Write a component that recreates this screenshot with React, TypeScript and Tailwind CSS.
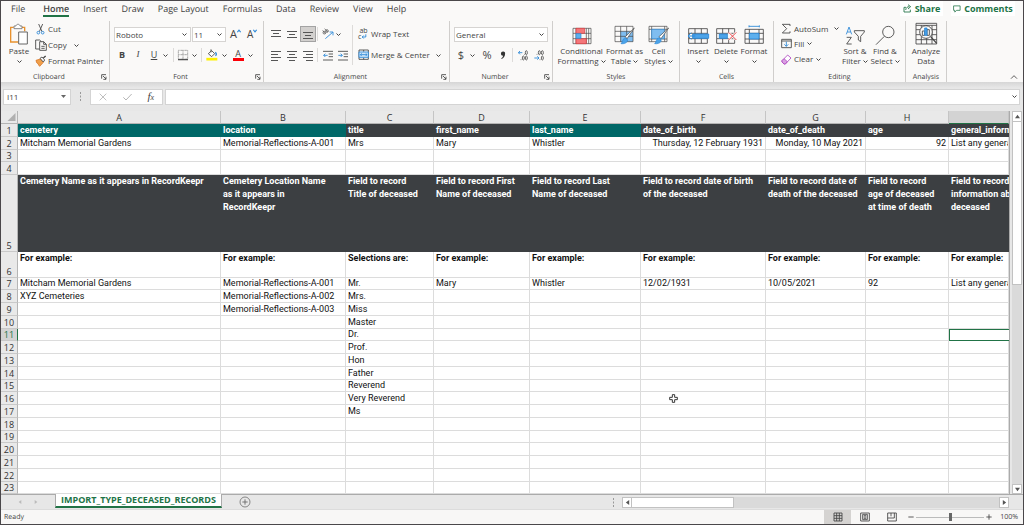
import { type ReactNode } from "react";

const INK = "#444444";
const BLUE = "#2b88d8";

function Chevron({ className = "" }: { className?: string }) {
  return (
    <svg viewBox="0 0 10 10" className={`h-[5px] w-[5px] shrink-0 ${className}`} fill="none" stroke={INK} strokeWidth="2">
      <path d="M1 3l4 4 4-4" />
    </svg>
  );
}

function Icon({ box, className, children }: { box: string; className: string; children: ReactNode }) {
  return (
    <svg viewBox={box} className={`shrink-0 ${className}`} fill="none" stroke={INK} strokeWidth="2.6">
      {children}
    </svg>
  );
}

function Group({ label, width, launcher = false, children }: { label: string; width: string; launcher?: boolean; children: ReactNode }) {
  return (
    <section aria-label={label} className={`flex shrink-0 flex-col ${width}`}>
      <div className="flex h-[50px] w-full border-r border-[#d0cecc]">{children}</div>
      <div className="flex h-[11px] items-center border-r border-[#d0cecc] pt-px text-[7px] leading-[11px]">
        <span className="flex-1 text-center">{label}</span>
        {launcher && (
          <button aria-label={`${label} settings`} className="ml-1 mr-[2px]">
            <Icon box="0 0 18 18" className="h-[6px] w-[6px]">
              <path d="M2 14V2h13M6 6l9 9M15 8v8H7" />
            </Icon>
          </button>
        )}
      </div>
    </section>
  );
}

function Sep({ className = "h-[14px]" }: { className?: string }) {
  return <span className={`w-px shrink-0 bg-[#dddbd9] ${className}`} />;
}

function Picker({ label, value, width }: { label: string; value: string; width: string }) {
  return (
    <div className={`flex h-[15px] items-center border border-[#d6d4d2] bg-white pr-[3px] ${width}`}>
      <select aria-label={label} defaultValue={value} className="h-[13px] min-w-0 flex-1 appearance-none bg-transparent pl-[1px] text-[8px] leading-[13px] outline-none">
        <option>{value}</option>
      </select>
      <Chevron />
    </div>
  );
}

function BigButton({ lines, width, icon, chevron = "none" }: { lines: string[]; width: string; icon: ReactNode; chevron?: "none" | "inline" | "below" }) {
  return (
    <button className={`flex shrink-0 flex-col items-center text-[8px] leading-[10px] ${width}`}>
      <span className="flex h-[25px] items-end justify-center pb-[1px]">{icon}</span>
      <span className="whitespace-nowrap">{lines[0]}</span>
      {lines[1] && (
        <span className="flex items-center gap-[2px] whitespace-nowrap">
          {lines[1]}
          {chevron === "inline" && <Chevron />}
        </span>
      )}
      {chevron === "below" && (
        <span className="flex h-[10px] items-center">
          <Chevron />
        </span>
      )}
    </button>
  );
}

function RowButton({ icon, text, chevron, height = "h-[16px]" }: { icon: ReactNode; text: string; chevron?: string; height?: string }) {
  return (
    <button className={`flex items-center text-[8px] ${height}`}>
      <span className="flex w-[13px] items-center">{icon}</span>
      <span className="whitespace-nowrap">{text}</span>
      {chevron && <Chevron className={chevron} />}
    </button>
  );
}

function Tool({ label, width = "w-[16px]", active = false, children }: { label: string; width?: string; active?: boolean; children: ReactNode }) {
  return (
    <button
      aria-label={label}
      className={`flex h-[16px] shrink-0 items-center justify-center ${width} ${active ? "border border-[#a3a3a3] bg-[#d2d0ce]" : ""}`}
    >
      {children}
    </button>
  );
}

function Lines({ d }: { d: string }) {
  return (
    <svg viewBox="0 0 10 11" className="h-[11px] w-[10px]" stroke="#555555" strokeWidth="1" fill="none">
      <path d={d} />
    </svg>
  );
}

function ClipboardGroup() {
  return (
    <Group label="Clipboard" width="w-[109px]" launcher>
      <div className="ml-[3px]">
        <BigButton
          lines={["Paste"]}
          width="w-[30px]"
          chevron="below"
          icon={
            <Icon box="33 67 60 66" className="h-[22px] w-[20px]">
              <path d="M47 80H38v44h24M72 80h8v12" stroke="#e8912d" strokeWidth="4" />
              <path d="M48 84v-8h6c1-7 11-7 12 0h6v8z" fill="#fff" stroke="#777" />
              <path d="M62 94h26v36H62z" fill="#fff" stroke="#666" strokeWidth="3" />
            </Icon>
          }
        />
      </div>
      <div className="ml-[1px] flex flex-col">
        <RowButton
          text="Cut"
          icon={
            <Icon box="105 69 36 36" className="h-[12px] w-[12px]">
              <path d="M116 72l10 23M128 72l-10 23" />
              <circle cx="115" cy="98" r="4" stroke={BLUE} />
              <circle cx="128" cy="98" r="4" stroke={BLUE} />
            </Icon>
          }
        />
        <RowButton
          text="Copy"
          chevron="ml-[7px]"
          icon={
            <Icon box="104 116 36 36" className="h-[12px] w-[12px]">
              <path d="M117 146h-11v-27h12l5 5" />
              <path d="M118 124h12l8 8v18h-20zM130 124v8h8M123 138h10M123 144h10" />
            </Icon>
          }
        />
        <RowButton
          text="Format Painter"
          icon={
            <Icon box="105 164 36 36" className="h-[12px] w-[12px]">
              <path d="M108 180l14-4 8 10-11 12-3-4-2-4-4-3z" fill="#f0a04b" stroke="#d9782a" />
              <path d="M120 174l6-4 8 9-4 6z" fill="#fff" />
              <path d="M130 173l7-6" strokeWidth="4" />
            </Icon>
          }
        />
      </div>
    </Group>
  );
}

function FontGroup() {
  return (
    <Group label="Font" width="w-[154px]" launcher>
      <div className="flex flex-col pl-1 pt-[6px]">
        <div className="flex h-[15px] items-center">
          <Picker label="Font" value="Roboto" width="w-[77px]" />
          <Picker label="Font size" value="11" width="ml-[1px] w-[34px]" />
          <button aria-label="Increase font size" className="ml-[4px] flex h-[15px] items-start text-[11px] leading-[14px]">
            A
            <Icon box="0 0 10 10" className="mt-[2px] h-[4px] w-[4px]">
              <path d="M1 8l4-5 4 5" stroke={BLUE} />
            </Icon>
          </button>
          <button aria-label="Decrease font size" className="ml-[6px] flex h-[15px] items-start text-[10px] leading-[15px]">
            A
            <Icon box="0 0 10 10" className="mt-[2px] h-[4px] w-[4px]">
              <path d="M1 2l4 5 4-5" stroke={BLUE} />
            </Icon>
          </button>
        </div>
        <div className="mt-[5px] flex h-[16px] items-center text-[9px]">
          <Tool label="Bold"><b>B</b></Tool>
          <Tool label="Italic"><i className="font-['Liberation_Serif',serif]">I</i></Tool>
          <Tool label="Underline"><u>U</u></Tool>
          <Chevron className="ml-[1px]" />
          <Sep className="ml-[5px] h-[14px]" />
          <Tool label="Borders" width="w-[18px]">
            <Icon box="0 0 36 36" className="h-[12px] w-[12px]">
              <path d="M4 4h28v26H4zM18 4v26M4 17h28" stroke="#888" strokeDasharray="2.5 1.5" />
              <path d="M3 32h30" strokeWidth="3.5" />
            </Icon>
          </Tool>
          <Chevron />
          <Sep className="ml-[4px] h-[14px]" />
          <Tool label="Fill color" width="w-[20px]">
            <Icon box="624 148 36 36" className="h-[12px] w-[12px]">
              <path d="M631 162l10-9 9 9-9 9z" fill="#fff" />
              <path d="M639 149v9" />
              <path d="M652 158c4 4 4 8 0 10" stroke={BLUE} strokeWidth="4" />
              <path d="M625 178.500h33" stroke="#fff100" strokeWidth="8" />
            </Icon>
          </Tool>
          <Chevron />
          <Tool label="Font color" width="ml-[2px] w-[18px]">
            <span className="flex flex-col items-center">
              <span className="leading-[9px]">A</span>
              <span className="h-[3px] w-[11px] bg-[#fb0007]" />
            </span>
          </Tool>
          <Chevron className="ml-[1px]" />
        </div>
      </div>
    </Group>
  );
}

function AlignmentGroup() {
  return (
    <Group label="Alignment" width="w-[186px]" launcher>
      <div className="flex flex-col gap-[5px] pl-[4px] pt-[5px]">
        <div className="flex h-[16px] items-center">
          <Tool label="Top align"><Lines d="M0 1.500h10M2 4.500h6M0 7.500h10" /></Tool>
          <Tool label="Middle align"><Lines d="M0 2.500h10M2 5.500h6M0 8.500h10" /></Tool>
          <Tool label="Bottom align" active><Lines d="M0 3.500h10M2 6.500h6M0 9.500h10" /></Tool>
          <Sep className="ml-[1px] h-[14px]" />
          <Tool label="Orientation" width="ml-[3px] w-[14px]">
            <Icon box="200 84 36 34" className="h-[12px] w-[12px]">
              <circle cx="207" cy="97" r="4" strokeWidth="2" />
              <circle cx="215" cy="92" r="4" strokeWidth="2" />
              <path d="M202 90l8 10M208 85l9 10" strokeWidth="2" />
              <path d="M210 115l22-19M223 95h10v10" stroke={BLUE} />
            </Icon>
          </Tool>
          <Chevron className="ml-[1px]" />
        </div>
        <div className="flex h-[16px] items-center">
          <Tool label="Align left"><Lines d="M0 1.500h10M0 4.500h7M0 7.500h10M0 10.500h7" /></Tool>
          <Tool label="Center"><Lines d="M0 1.500h10M2 4.500h6M0 7.500h10M2 10.500h6" /></Tool>
          <Tool label="Align right"><Lines d="M0 1.500h10M3 4.500h7M0 7.500h10M3 10.500h7" /></Tool>
          <Sep className="ml-[1px] h-[14px]" />
          <Tool label="Decrease indent" width="ml-[3px] w-[14px]">
            <Icon box="0 0 30 33" className="h-[11px] w-[10px]">
              <path d="M0 4h30M17 12h13M17 20h13M0 30h30" />
              <path d="M14 16H2M7 11l-5 5 5 5" stroke={BLUE} />
            </Icon>
          </Tool>
          <Tool label="Increase indent">
            <Icon box="0 0 30 33" className="h-[11px] w-[10px]">
              <path d="M0 4h30M17 12h13M17 20h13M0 30h30" />
              <path d="M1 16h12M8 11l5 5-5 5" stroke={BLUE} />
            </Icon>
          </Tool>
        </div>
      </div>
      <Sep className="ml-[1px] mt-[4px] h-[40px]" />
      <div className="ml-[5px] flex flex-col gap-[5px] pt-[5px]">
        <RowButton
          text="Wrap Text"
          icon={
            <span className="flex w-[11px] flex-col text-[7px] leading-[6px]">
              <span>ab</span>
              <span className="flex items-center">
                c
                <Icon box="0 0 20 18" className="h-[6px] w-[6px]">
                  <path d="M16 0v9H4M9 4L4 9l5 5" stroke={BLUE} strokeWidth="3" />
                </Icon>
              </span>
            </span>
          }
        />
        <RowButton
          text="Merge & Center"
          chevron="ml-[6px]"
          icon={
            <Icon box="309 149 36 36" className="h-[12px] w-[12px]">
              <path d="M312 152h28v28h-28zM326 152v5M326 175v5" />
              <path d="M312 158h28v16h-28z" fill="#cfe6f8" stroke={BLUE} />
              <path d="M316 166h20M320 162l-4 4 4 4M332 162l4 4-4 4" stroke={BLUE} />
            </Icon>
          }
        />
      </div>
    </Group>
  );
}

function Decimals({ arrow, topX, bottomX, dots }: { arrow: string; topX: number[]; bottomX: number[]; dots: string }) {
  return (
    <Icon box="0 0 30 33" className="h-[11px] w-[10px]">
      <path d={arrow} stroke={BLUE} />
      {topX.map((x) => (
        <ellipse key={x} cx={x} cy="8" rx="3" ry="6" strokeWidth="2.4" />
      ))}
      {bottomX.map((x) => (
        <ellipse key={x} cx={x} cy="24" rx="3" ry="6" strokeWidth="2.4" />
      ))}
      <path d={dots} />
    </Icon>
  );
}

function NumberGroup() {
  return (
    <Group label="Number" width="w-[103px]" launcher>
      <div className="flex flex-col pl-[4px] pt-[6px]">
        <Picker label="Number format" value="General" width="w-[94px]" />
        <div className="mt-[5px] flex h-[16px] items-center text-[11px]">
          <Tool label="Accounting format" width="w-[14px]">$</Tool>
          <Chevron className="ml-[2px]" />
          <Tool label="Percent style" width="ml-[4px] w-[16px]">%</Tool>
          <Tool label="Comma style">
            <svg viewBox="0 0 18 30" className="h-[9px] w-[6px]" fill="#333">
              <path d="M9 2a6 6 0 0 1 7 7c0 9-5 15-12 18l-1-2c4-3 6-5 6-9a7 7 0 0 1 0-14z" />
            </svg>
          </Tool>
          <Sep className="ml-[1px] h-[14px]" />
          <Tool label="Increase decimal" width="ml-[2px] w-[16px]">
            <Decimals arrow="M13 8H1M6 3L1 8l5 5" topX={[25]} bottomX={[16, 25]} dots="M18 13h2M8 29h2" />
          </Tool>
          <Tool label="Decrease decimal">
            <Decimals arrow="M1 24h14M10 19l5 5-5 5" topX={[16, 25]} bottomX={[25]} dots="M8 13h2M17 29h2" />
          </Tool>
        </div>
      </div>
    </Group>
  );
}

function StylesGroup() {
  return (
    <Group label="Styles" width="w-[127px]">
      <div className="flex pl-[4px]">
        <BigButton
          lines={["Conditional", "Formatting"]}
          width="w-[49px]"
          chevron="inline"
          icon={
            <Icon box="381 73 60 54" className="h-[18px] w-[20px]">
              <path d="M384 77h54v46h-54zM384 92h54M384 108h54M393 77v46M424 77v46M431 77v46" strokeWidth="2" />
              <path d="M393 77h26v15h-26zM393 108h31v15h-31z" fill="#f4777a" stroke="#d9353a" strokeWidth="2" />
              <path d="M393 93h15v14h-15z" fill="#5eb0ee" stroke={BLUE} strokeWidth="2" />
            </Icon>
          }
        />
        <BigButton
          lines={["Format as", "Table"]}
          width="w-[37px]"
          chevron="inline"
          icon={
            <Icon box="511 73 66 60" className="h-[20px] w-[22px]">
              <path d="M530 92h38v31h-38z" fill="#7fbdf0" stroke="none" />
              <path d="M514 77h54v46h-54zM514 92h54M514 107h54M531 77v46M549 77v46" strokeWidth="2" />
              <path d="M572 82l-22 32-5-6z" fill="#fff" strokeWidth="2" />
              <path d="M543 112c5 0 10 4 8 10-3 6-11 8-19 7 5-4 4-14 11-17z" fill="#4ca3e8" stroke={BLUE} strokeWidth="2" />
            </Icon>
          }
        />
        <BigButton
          lines={["Cell", "Styles"]}
          width="w-[31px]"
          chevron="inline"
          icon={
            <Icon box="611 73 66 60" className="h-[20px] w-[22px]">
              <path d="M614 77h54v46h-54zM614 86h54M614 115h54M622 77v46M661 77v46" strokeWidth="2" />
              <path d="M622 86h38v28h-38z" fill="#7fbdf0" stroke={BLUE} strokeWidth="2" />
              <path d="M673 82l-23 32-6-6z" fill="#fff" strokeWidth="2" />
              <path d="M642 112c5 0 10 4 8 10-3 6-11 8-19 7 5-4 4-14 11-17z" fill="#4ca3e8" stroke={BLUE} strokeWidth="2" />
            </Icon>
          }
        />
      </div>
    </Group>
  );
}

function CellsGroup() {
  return (
    <Group label="Cells" width="w-[94px]">
      <div className="flex pl-[4px]">
        <BigButton
          lines={["Insert"]}
          width="w-[28px]"
          chevron="below"
          icon={
            <Icon box="23 69 69 57" className="h-[19px] w-[23px]">
              <path d="M28 77h56v44H28zM28 91h56M28 107h56M47 77v44M66 77v44" strokeWidth="2.500" />
              <path d="M40 93h48v13H40z" fill="#4ca3e8" stroke={BLUE} />
              <path d="M48 99H26M36 89L26 99l10 10" stroke={BLUE} strokeWidth="3" />
            </Icon>
          }
        />
        <BigButton
          lines={["Delete"]}
          width="w-[28px]"
          chevron="below"
          icon={
            <Icon box="107 69 69 57" className="h-[19px] w-[23px]">
              <path d="M166 91V77h-54v14h54M112 107v14h54v-14zM130 77v14M148 77v14M130 107v14M148 107v14M112 91v16" strokeWidth="2.500" />
              <path d="M120 93h24v13h-24z" fill="#4ca3e8" stroke={BLUE} />
              <path d="M148 88l23 23M171 88l-23 23" stroke="#faf9f8" strokeWidth="7" />
              <path d="M148 88l23 23M171 88l-23 23" stroke="#e8484d" strokeWidth="3" />
            </Icon>
          }
        />
        <BigButton
          lines={["Format"]}
          width="w-[28px]"
          chevron="below"
          icon={
            <Icon box="189 66 66 60" className="h-[20px] w-[22px]">
              <path d="M195 79h55v42h-55zM195 91h55M195 108h55M208 79v42M237 79v42" strokeWidth="2.500" />
              <path d="M208 91h29v17h-29z" fill="#5eb0ee" stroke={BLUE} />
              <path d="M207 70h31M207 67v6M238 67v6" stroke={BLUE} />
            </Icon>
          }
        />
      </div>
    </Group>
  );
}

function EditingGroup() {
  return (
    <Group label="Editing" width="w-[132px]">
      <div className="flex w-[66px] flex-col pl-[7px]">
        <RowButton
          text="AutoSum"
          chevron="ml-[6px]"
          height="h-[15px]"
          icon={
            <Icon box="303 67 33 33" className="h-[11px] w-[11px]">
              <path d="M330 76v-5h-23l13 13-13 13h23v-5" />
            </Icon>
          }
        />
        <RowButton
          text="Fill"
          chevron="ml-[3px]"
          height="h-[15px]"
          icon={
            <Icon box="302 113 33 33" className="h-[11px] w-[11px]">
              <path d="M304 117h29v25h-29zM304 122h29" />
              <path d="M318 124v14M312 132l6 6 6-6" stroke={BLUE} />
            </Icon>
          }
        />
        <RowButton
          text="Clear"
          chevron="ml-[3px]"
          height="h-[16px]"
          icon={
            <Icon box="302 160 33 33" className="h-[11px] w-[11px]">
              <path d="M305 180l17-17 10 9-17 18h-4l-6-6z" fill="#fff" stroke="#b04ac2" />
              <path d="M305 180l6-6 10 9-6 7h-4l-6-6z" fill="#d9a0e2" stroke="#b04ac2" />
            </Icon>
          }
        />
      </div>
      <BigButton
        lines={["Sort &", "Filter"]}
        width="w-[30px]"
        chevron="inline"
        icon={
          <Icon box="496 70 63 57" className="h-[19px] w-[21px]">
            <path d="M500 95l8-22 8 22M503 88h10" stroke={BLUE} />
            <path d="M501 104h14l-14 20h15" />
            <path d="M524 84h30v4l-11 13v16l-7-5v-11l-12-13z" />
          </Icon>
        }
      />
      <BigButton
        lines={["Find &", "Select"]}
        width="w-[30px]"
        chevron="inline"
        icon={
          <Icon box="583 68 60 60" className="h-[20px] w-[20px]">
            <circle cx="623" cy="89" r="17" />
            <path d="M611 102l-25 25" />
          </Icon>
        }
      />
    </Group>
  );
}

function AnalysisGroup() {
  return (
    <Group label="Analysis" width="w-[41px]">
      <BigButton
        lines={["Analyze", "Data"]}
        width="w-[40px]"
        icon={
          <Icon box="705 65 69 69" className="h-[23px] w-[23px]">
            <path d="M708 69h62v62h-62zM708 75h62M708 88h62M708 103h62M708 118h62M724 75v56M740 75v56M756 75v56" strokeWidth="2.500" />
            <circle cx="738" cy="95" r="19" fill="#faf9f8" />
            <path d="M752 109l18 20" strokeWidth="4" />
            <path d="M727 92h7v13h-7zM741 88h7v17h-7z" />
            <path d="M734 83h7v22h-7z" fill="#4ca3e8" stroke={BLUE} />
          </Icon>
        }
      />
    </Group>
  );
}

const TABS = ["Insert", "Draw", "Page Layout", "Formulas", "Data", "Review", "View", "Help"];

function TopBar() {
  return (
    <header className="flex h-[20px] items-start bg-[#faf9f8] text-[9px]">
      <nav className="flex h-[16px] items-center gap-[14px] whitespace-nowrap pl-[10px]">
        <a href="#file" className="mr-[4px]">File</a>
        <a href="#home" className="mt-[1px] flex h-[15px] items-center border-b-2 border-[#217346] font-semibold">Home</a>
        {TABS.map((t) => (
          <a key={t} href="#tab">{t}</a>
        ))}
      </nav>
      <div className="ml-auto flex gap-[8px] pr-[8px] font-bold text-[#217346]">
        <button className="flex h-[15px] w-[43px] items-center justify-center gap-[3px] bg-white">
          <Icon box="0 0 27 27" className="h-[9px] w-[9px]">
            <path d="M9 10H3v14h19v-7M8 18c1-7 5-10 11-10M15 2l8 6-8 7" stroke="#217346" />
          </Icon>
          Share
        </button>
        <button className="flex h-[15px] w-[64px] items-center justify-center gap-[3px] bg-white">
          <Icon box="0 0 27 27" className="h-[8px] w-[8px]">
            <path d="M2 3h22v15H12l-6 6v-6H2z" stroke="#217346" />
          </Icon>
          Comments
        </button>
      </div>
    </header>
  );
}

function FormulaBar() {
  return (
    <div className="flex h-[29px] items-center bg-gradient-to-b from-[#d6d6d6] via-[#e7e7e7] via-20% to-[#e7e7e7] pl-[2px] pr-[3px] text-[8px]">
      <div className="flex h-[16px] w-[68px] items-center border border-[#d4d4d4] bg-white pr-[4px]">
        <input aria-label="Name box" defaultValue="I11" className="min-w-0 flex-1 bg-transparent pl-[3px] outline-none" />
        <svg viewBox="0 0 10 6" className="h-[3px] w-[5px]" fill="#666">
          <path d="M0 0h10L5 6z" />
        </svg>
      </div>
      <Dots className="mx-[8px]" />
      <div className="flex h-[16px] w-[73px] items-center justify-around border border-[#d4d4d4] bg-white">
        <button aria-label="Cancel">
          <Icon box="0 0 24 24" className="h-[8px] w-[8px]"><path d="M2 2l20 20M22 2L2 22" stroke="#b5b5b5" /></Icon>
        </button>
        <button aria-label="Enter">
          <Icon box="0 0 27 24" className="h-[8px] w-[9px]"><path d="M1 13l8 8L26 3" stroke="#b5b5b5" strokeWidth="3" /></Icon>
        </button>
        <button aria-label="Insert function" className="font-['Liberation_Serif',serif] text-[11px] italic leading-[13px]">
          f<span className="text-[8px]">x</span>
        </button>
      </div>
      <div className="ml-[2px] flex h-[16px] flex-1 items-center border border-[#d4d4d4] bg-white pr-[2px]">
        <input aria-label="Formula" className="min-w-0 flex-1 bg-transparent outline-none" />
        <Chevron />
      </div>
    </div>
  );
}

function Dots({ className }: { className: string }) {
  return (
    <svg viewBox="0 0 3 9" className={`h-[9px] w-[3px] shrink-0 ${className}`} fill="#999">
      <path d="M1 0h1v2H1zM1 3.500h1v2H1zM1 7h1v2H1z" />
    </svg>
  );
}

const COLUMNS = ["A", "B", "C", "D", "E", "F", "G", "H", "I"];
const WIDTHS = ["w-[203px]", "w-[125px]", "w-[88px]", "w-[96px]", "w-[111px]", "w-[125px]", "w-[100px]", "w-[83px]", ""];
const TEAL = ["A", "B", "E"];

const SHEET: Record<number, string[]> = {
  1: ["cemetery", "location", "title", "first_name", "last_name", "date_of_birth", "date_of_death", "age", "general_information"],
  2: ["Mitcham Memorial Gardens", "Memorial-Reflections-A-001", "Mrs", "Mary", "Whistler", "Thursday, 12 February 1931", "Monday, 10 May 2021", "92", "List any general"],
  5: [
    "Cemetery Name as it appears in RecordKeepr",
    "Cemetery Location Name\nas it appears in\nRecordKeepr",
    "Field to record\nTitle of deceased",
    "Field to record First\nName of deceased",
    "Field to record Last\nName of deceased",
    "Field to record date of birth\nof the deceased",
    "Field to record date of\ndeath of the deceased",
    "Field to record\nage of deceased\nat time of death",
    "Field to record\ninformation about\ndeceased",
  ],
  6: ["For example:", "For example:", "Selections are:", "For example:", "For example:", "For example:", "For example:", "For example:", "For example:"],
  7: ["Mitcham Memorial Gardens", "Memorial-Reflections-A-001", "Mr.", "Mary", "Whistler", "12/02/1931", "10/05/2021", "92", "List any general"],
  8: ["XYZ Cemeteries", "Memorial-Reflections-A-002", "Mrs."],
  9: ["", "Memorial-Reflections-A-003", "Miss"],
  10: ["", "", "Master"],
  11: ["", "", "Dr."],
  12: ["", "", "Prof."],
  13: ["", "", "Hon"],
  14: ["", "", "Father"],
  15: ["", "", "Reverend"],
  16: ["", "", "Very Reverend"],
  17: ["", "", "Ms"],
};

function rowHeight(n: number) {
  if (n === 5) return "h-[77px]";
  if (n === 6) return "h-[26px]";
  return n % 4 === 3 ? "h-[12px]" : "h-[13px]";
}

function cellLook(n: number, col: string) {
  if (n === 1) return TEAL.includes(col) ? "bg-[#006868] font-bold text-white" : "bg-[#3c3f42] font-bold text-white";
  if (n === 5) return "bg-[#3c3f42] font-bold text-white align-top leading-[13px]";
  const line = "border-b border-r border-[#dcdcdc]";
  if (n === 6) return `${line} align-top font-bold leading-[13px]`;
  if (n === 11 && col === "I") return "border border-r-0 border-[#217346]";
  if (n === 2 && ["F", "G", "H"].includes(col)) return `${line} text-right`;
  return line;
}

function Sheet() {
  return (
    <table className="w-full table-fixed border-separate border-spacing-0 bg-white font-[Roboto,sans-serif] text-[9px] leading-[11px] text-[#111111] [text-rendering:auto]">
      <thead>
        <tr className="h-[13px] bg-[#e9e9e9] text-[#333333]">
          <th className="w-[17px] border-b border-r border-[#b5b5b5] p-0">
            <svg viewBox="0 0 10 10" className="ml-auto mr-[1px] h-[8px] w-[9px]" fill="#b0b0b0">
              <path d="M10 0v10H0z" />
            </svg>
          </th>
          {COLUMNS.map((c, i) => (
            <th
              key={c}
              scope="col"
              className={`h-[13px] overflow-hidden border-r p-0 font-['Open_Sans',sans-serif] text-[9px] font-normal ${WIDTHS[i]} ${
                c === "I" ? "border-b border-b-[#217346] border-r-[#c5c5c5] bg-[#d3d3d3]" : "border-b border-b-[#b5b5b5] border-r-[#c5c5c5]"
              }`}
            >
              {c === "I" ? "" : c}
            </th>
          ))}
        </tr>
      </thead>
      <tbody>
        {Array.from({ length: 23 }, (_, i) => i + 1).map((n) => (
          <tr key={n} className={rowHeight(n)}>
            <th
              scope="row"
              className={`border-b p-0 align-bottom font-['Open_Sans',sans-serif] text-[9px] font-normal ${
                n === 11 ? "border-r border-b-[#c9c9c9] border-r-[#217346] bg-[#d3d3d3] text-[#217346]" : "border-r border-b-[#c9c9c9] border-r-[#b5b5b5] bg-[#e9e9e9] text-[#333333]"
              }`}
            >
              {n}
            </th>
            {COLUMNS.map((c, i) => (
              <td key={c} className={`overflow-hidden whitespace-pre px-[2px] py-0 ${cellLook(n, c)}`}>
                {SHEET[n]?.[i] ?? ""}
                {n === 16 && c === "F" && (
                  <svg viewBox="0 0 27 27" className="ml-[26px] h-[9px] w-[9px]" fill="#fff" stroke="#111" strokeWidth="2.500">
                    <path d="M10 2h7v8h8v7h-8v8h-7v-8H2v-7h8z" />
                  </svg>
                )}
              </td>
            ))}
          </tr>
        ))}
      </tbody>
    </table>
  );
}

function ScrollButton({ label, d, className }: { label: string; d: string; className: string }) {
  return (
    <button aria-label={label} className={`flex shrink-0 items-center justify-center border border-[#c2c2c2] bg-white ${className}`}>
      <svg viewBox="0 0 6 6" className="h-[5px] w-[5px]" fill="#555">
        <path d={d} />
      </svg>
    </button>
  );
}

function SheetTabs() {
  return (
    <div className="flex h-[16px] items-start border-b border-[#dcdcdc] bg-[#e7e7e7]">
      <div className="flex h-[15px] w-[54px] items-center justify-center gap-[12px] border-t border-[#ababab]">
        <svg viewBox="0 0 6 6" className="h-[4px] w-[4px]" fill="#bbb"><path d="M5 0v6L1 3z" /></svg>
        <svg viewBox="0 0 6 6" className="h-[4px] w-[4px]" fill="#bbb"><path d="M1 0v6l4-3z" /></svg>
      </div>
      <button className="h-[14px] w-[167px] shrink-0 border-x border-b-2 border-x-[#ababab] border-b-[#217346] bg-white text-[9px] font-bold leading-[12px] text-[#217346]">
        IMPORT_TYPE_DECEASED_RECORDS
      </button>
      <div className="flex h-[15px] min-w-0 flex-1 items-center border-t border-[#ababab] pl-[17px] pr-[14px]">
        <button aria-label="New sheet">
          <Icon box="0 0 36 36" className="h-[12px] w-[12px]">
            <circle cx="18" cy="18" r="15" stroke="#777" />
            <path d="M18 10v16M10 18h16" stroke="#666" />
          </Icon>
        </button>
        <div className="ml-auto flex w-[397px] items-center">
          <Dots className="mr-[7px]" />
          <ScrollButton label="Scroll left" d="M5 0v6L1 3z" className="h-[11px] w-[10px]" />
          <div className="flex h-[11px] flex-1 bg-[#dadada]">
            <div className="h-[11px] w-[102px] border border-l-0 border-[#c2c2c2] bg-white" />
          </div>
          <ScrollButton label="Scroll right" d="M1 0v6l4-3z" className="h-[11px] w-[10px]" />
        </div>
      </div>
    </div>
  );
}

function StatusBar() {
  return (
    <footer className="flex h-[14px] items-center bg-[#f8f7f6] pl-[3px] pr-[5px] text-[7px] leading-[8px]">
      <span className="pt-[2px]">Ready</span>
      <div className="ml-auto flex h-[14px] items-center">
        <button aria-label="Normal view" className="flex h-[14px] w-[27px] items-center justify-center bg-[#d5d3d1]">
          <Icon box="0 0 30 30" className="h-[10px] w-[10px]"><path d="M3 3h24v24H3zM3 11h24M3 19h24M11 3v24M19 3v24" /></Icon>
        </button>
        <button aria-label="Page layout view" className="flex w-[27px] justify-center">
          <Icon box="0 0 30 30" className="h-[10px] w-[10px]"><path d="M2 3h26v24H2zM8 7h14v16H8zM11 11h8M11 15h8M11 19h8" /></Icon>
        </button>
        <button aria-label="Page break view" className="flex w-[27px] justify-center">
          <Icon box="0 0 30 30" className="h-[10px] w-[10px]"><path d="M2 3h26v24H2zM2 18h20V3M12 3v10" /></Icon>
        </button>
        <button aria-label="Zoom out" className="ml-[3px]">
          <Icon box="0 0 18 18" className="h-[6px] w-[6px]"><path d="M1 9h16" /></Icon>
        </button>
        <input
          type="range"
          aria-label="Zoom"
          defaultValue="50"
          className="mx-[2px] h-[9px] w-[68px] appearance-none bg-[linear-gradient(#bbb,#bbb)] bg-[length:100%_1px] bg-center bg-no-repeat [&::-webkit-slider-thumb]:h-[8px] [&::-webkit-slider-thumb]:w-[3px] [&::-webkit-slider-thumb]:appearance-none [&::-webkit-slider-thumb]:bg-[#666666]"
        />
        <button aria-label="Zoom in">
          <Icon box="0 0 18 18" className="h-[6px] w-[6px]"><path d="M1 9h16M9 1v16" /></Icon>
        </button>
        <span className="ml-[8px] pt-[2px]">100%</span>
      </div>
    </footer>
  );
}

export default function App() {
  return (
    <div className="flex min-h-screen flex-col border border-[#4a474a] bg-[#e7e7e7] font-['Open_Sans',sans-serif] text-[#444444] [text-rendering:geometricPrecision]">
      <TopBar />
      <div className="flex bg-[#faf9f8]">
        <ClipboardGroup />
        <FontGroup />
        <AlignmentGroup />
        <NumberGroup />
        <StylesGroup />
        <CellsGroup />
        <EditingGroup />
        <AnalysisGroup />
        <button aria-label="Collapse the ribbon" className="ml-auto mr-[5px] self-end pb-[2px]">
          <Icon box="0 0 24 18" className="h-[6px] w-[8px]"><path d="M3 14l9-9 9 9" /></Icon>
        </button>
      </div>
      <FormulaBar />
      <main className="flex">
        <div className="min-w-0 flex-1 border-r border-[#ababab]">
          <Sheet />
        </div>
        <div className="ml-[2px] mr-[1px] flex w-[10px] flex-col bg-[#dadada]">
          <ScrollButton label="Scroll up" d="M0 5h6L3 1z" className="h-[11px] w-[10px]" />
          <div className="h-[163px] border border-t-0 border-[#c2c2c2] bg-white" />
          <ScrollButton label="Scroll down" d="M0 1h6L3 5z" className="mt-auto h-[10px] w-[10px]" />
        </div>
      </main>
      <SheetTabs />
      <StatusBar />
    </div>
  );
}
